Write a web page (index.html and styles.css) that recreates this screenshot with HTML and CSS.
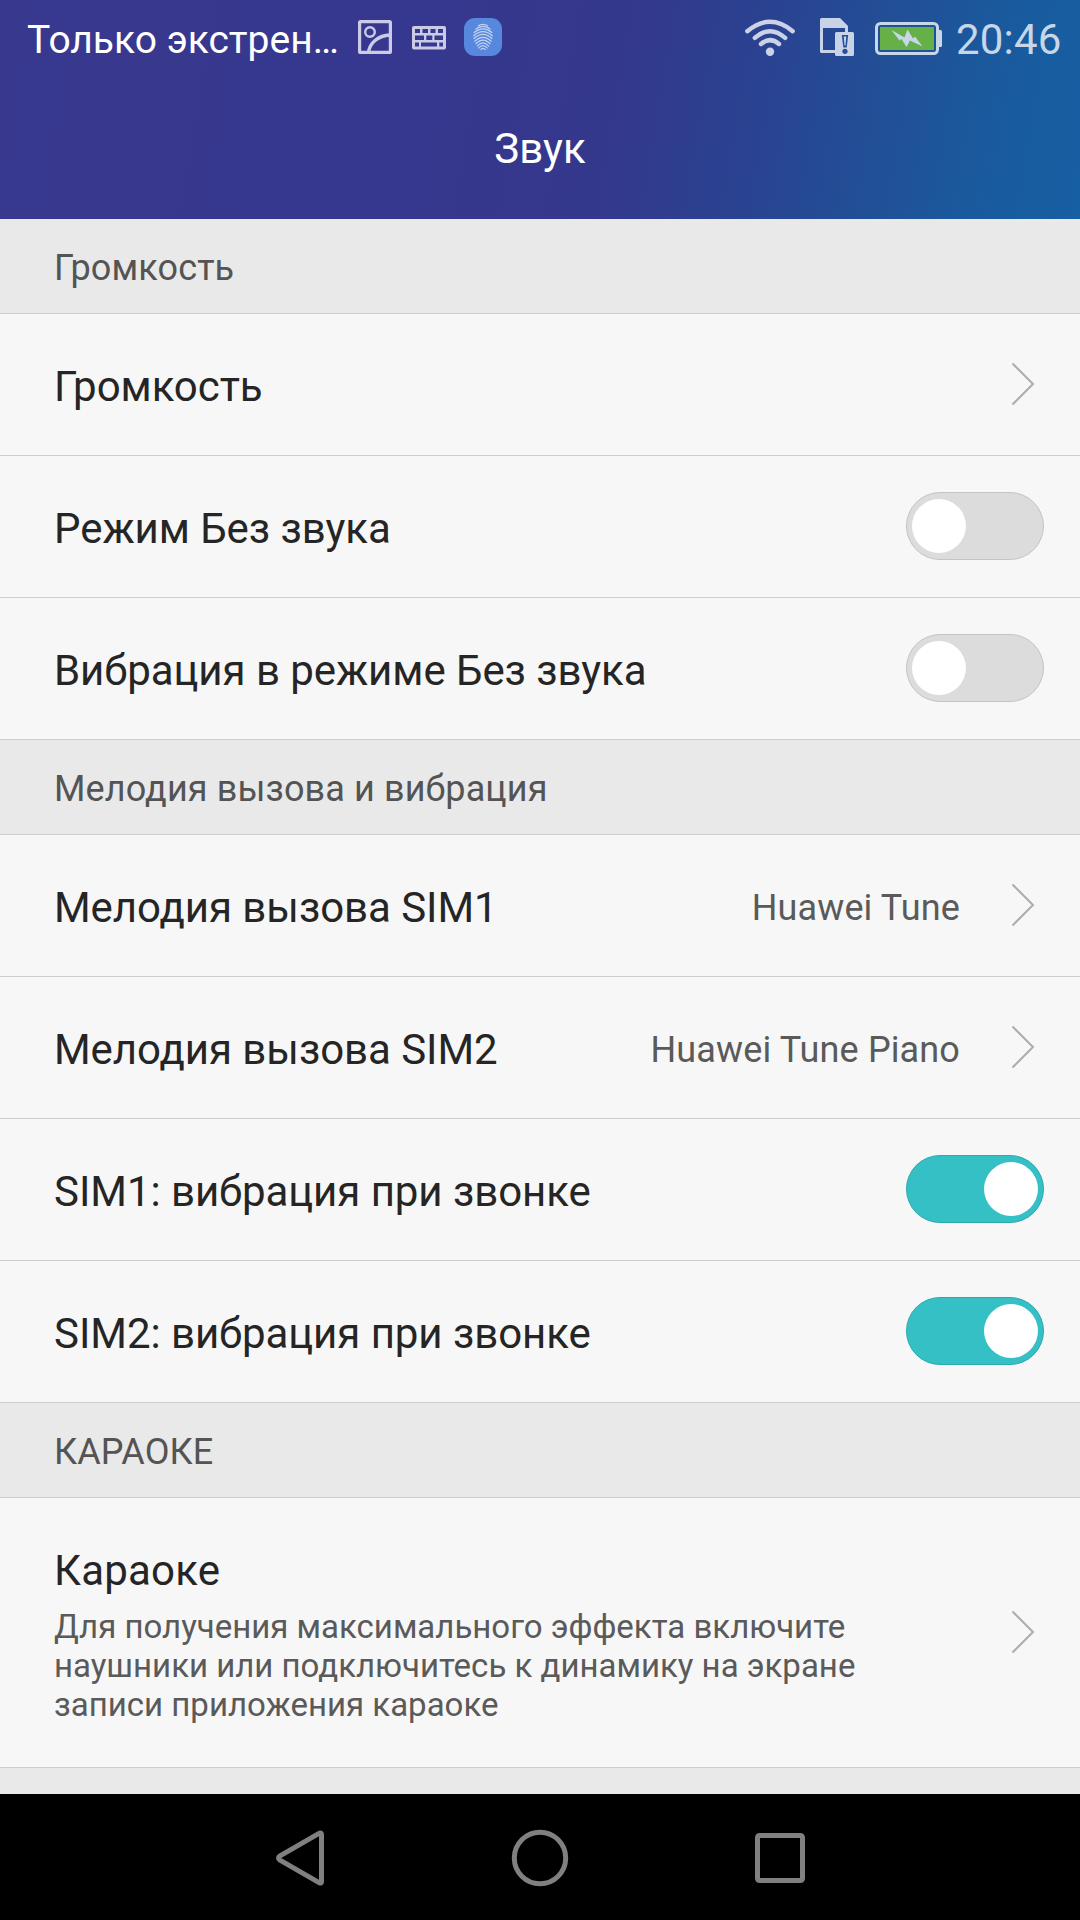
FILE: index.html
```html
<!DOCTYPE html>
<html lang="ru">
<head>
<meta charset="utf-8">
<title>Звук</title>
<link rel="stylesheet" href="styles.css">
</head>
<body>
<div class="screen">
  <header class="header">
    <div class="status">
      <span class="carrier">Только экстрен…</span>
      <svg class="icon-picture" width="34" height="34" viewBox="0 0 34 34" fill="none" stroke="#cbcbe5">
        <rect x="1.6" y="1.6" width="30.8" height="30.8" rx="1" stroke-width="3.2"/>
        <circle cx="12" cy="12" r="4.8" stroke-width="2.4"/>
        <path d="M10.500 32C12 23 20 15.500 32 15" stroke-width="3.400"/>
      </svg>
      <svg class="icon-keyboard" width="34" height="24" viewBox="0 0 34 24">
        <rect width="34" height="23.500" rx="2" fill="#cbcbe5"/>
        <path fill="#363990" d="M3 3h5v4h-5zM10.500 3h5.500v4h-5.500zM18.500 3h5v4h-5zM26 3h5v4h-5zM3 9.500h9v4.500h-9zM14.300 9.500h6v4.500h-6zM22.500 9.500h8.500v4.500h-8.500zM3 16.500h4v4h-4zM9 16.500h16v4h-16zM27.300 16.500h3.700v4h-3.700z"/>
      </svg>
      <svg class="icon-finger" width="38" height="38" viewBox="0 0 38 38" fill="none" stroke="#c6d4f1" stroke-width="1.200">
        <rect width="38" height="38" rx="11" fill="#5788dd" stroke="none"/>
        <path d="M14 8Q19 4.800 24 8M11.500 11.200Q19 5.500 26.500 11.200M9.800 14.800Q19 6.800 28.200 14.800M9.300 18Q19 9.200 28.700 18M9.700 20.800Q19 12 28.300 20.800M10.500 23.500Q19 15 27.500 23.500M11.700 26Q19 18.200 26.300 26M13 28.300Q19 21.500 25 28.300M14.500 30.300Q19 25 23.500 30.300M16.500 32Q19 28.800 21.500 32"/>
      </svg>
      <span class="spacer"></span>
      <svg class="icon-wifi" width="50" height="38" viewBox="0 0 50 38" fill="none" stroke="#cbd2e8" stroke-width="4.400" stroke-linecap="round">
        <path d="M2.300 13.200Q25-5.600 47.700 13.200M9.800 19.900Q25 6.500 40.200 19.900M16 26Q25 18.300 34 26"/>
        <circle cx="25" cy="33.800" r="4.200" fill="#cbd2e8" stroke="none"/>
      </svg>
      <svg class="icon-sim" width="34" height="38" viewBox="0 0 34 38">
        <path fill="#c8d3e8" fill-rule="evenodd" d="M1.500 0H20L28 8V14H32.500Q34 14 34 15.500V36.500Q34 38 32.500 38H16.500Q15 38 15 36.500V35H1.500Q0 35 0 33.500V1.500Q0 0 1.500 0ZM3 10V32H15V15.500Q15 14 16.500 14H25V10Z"/>
        <path fill="#24509a" d="M21.800 17h6.400l-1.500 12.500h-3.400z"/>
        <path fill="#c8d3e8" d="M23.800 18.500h2.400l-.7 9h-1z"/>
        <circle cx="25" cy="33.300" r="2.600" fill="#24509a"/>
      </svg>
      <svg class="icon-battery" width="67" height="33" viewBox="0 0 67 33">
        <rect x="1.500" y="1.500" width="61" height="30" rx="4" fill="none" stroke="#c7d6e8" stroke-width="3"/>
        <path d="M64 8h1.500q1.500 0 1.500 1.500v14q0 1.500-1.500 1.500H64z" fill="#c7d6e8"/>
        <rect x="5" y="5" width="54" height="23" fill="#66b147"/>
        <path fill="#c7d6e8" d="M16.500 8L29.500 15.500L32.500 7.500L38 16.500L40 14.500L47.500 24.500L35 18.500L31.500 25L26.500 17L24.500 18.500Z"/>
      </svg>
      <span class="time">20:46</span>
    </div>
    <h1 class="title">Звук</h1>
  </header>

  <main class="list">
    <h2 class="section">Громкость</h2>
    <div class="row">
      <span class="label">Громкость</span>
      <svg class="chevron" width="24" height="44" viewBox="0 0 24 44"><path d="M1.500 1.500L22 22L1.500 42.500"/></svg>
    </div>
    <div class="row">
      <span class="label">Режим Без звука</span>
      <span class="switch"><span class="knob"></span></span>
    </div>
    <div class="row">
      <span class="label">Вибрация в режиме Без звука</span>
      <span class="switch"><span class="knob"></span></span>
    </div>
    <h2 class="section">Мелодия вызова и вибрация</h2>
    <div class="row">
      <span class="label">Мелодия вызова SIM1</span>
      <span class="value">Huawei Tune</span>
      <svg class="chevron" width="24" height="44" viewBox="0 0 24 44"><path d="M1.500 1.500L22 22L1.500 42.500"/></svg>
    </div>
    <div class="row">
      <span class="label">Мелодия вызова SIM2</span>
      <span class="value">Huawei Tune Piano</span>
      <svg class="chevron" width="24" height="44" viewBox="0 0 24 44"><path d="M1.500 1.500L22 22L1.500 42.500"/></svg>
    </div>
    <div class="row">
      <span class="label">SIM1: вибрация при звонке</span>
      <span class="switch on"><span class="knob"></span></span>
    </div>
    <div class="row">
      <span class="label">SIM2: вибрация при звонке</span>
      <span class="switch on"><span class="knob"></span></span>
    </div>
    <h2 class="section">КАРАОКЕ</h2>
    <div class="row tall">
      <div class="texts">
        <span class="label">Караоке</span>
        <p class="summary">Для получения максимального эффекта включите<br>наушники или подключитесь к динамику на экране<br>записи приложения караоке</p>
      </div>
      <svg class="chevron" width="24" height="44" viewBox="0 0 24 44"><path d="M1.500 1.500L22 22L1.500 42.500"/></svg>
    </div>
  </main>

  <nav class="navbar">
    <svg width="60" height="60" viewBox="0 0 60 60"><path d="M10 27.800Q7 30 10 32.200L49.500 54.800Q51.500 55.500 51.500 53.500V6.500Q51.500 4.500 49.500 5.200Z"/></svg>
    <svg width="60" height="60" viewBox="0 0 60 60"><circle cx="30" cy="30" r="25.700"/></svg>
    <svg width="60" height="60" viewBox="0 0 60 60"><rect x="7.500" y="7.500" width="45" height="45" rx="2"/></svg>
  </nav>
</div>
</body>
</html>
```
FILE: styles.css
```css
* {
  box-sizing: border-box;
}

body {
  margin: 0;
  font-family: Roboto, "Noto Sans", sans-serif;
}

.screen {
  display: flex;
  flex-direction: column;
  width: 1080px;
  height: 1920px;
  overflow: hidden;
  background: #e9e9e9;
}

svg {
  display: block;
  flex: none;
}

.header {
  flex: none;
  height: 219px;
  color: #fff;
  background: linear-gradient(100deg, #38388f 0%, #36378e 40%, #34388c 56%, #2a4291 69%, #215097 81%, #185c9f 93%, #165fa2 100%);
}

.status {
  display: flex;
  align-items: flex-start;
  height: 75px;
  padding: 0 19px 0 27px;
}

.carrier {
  width: 331px;
  padding-top: 17px;
  font-size: 39px;
  line-height: 46px;
  white-space: nowrap;
}

.icon-picture {
  margin-top: 20px;
}

.icon-keyboard {
  margin: 26px 0 0 20px;
}

.icon-finger {
  margin: 18px 0 0 18px;
}

.spacer {
  flex: 1;
}

.icon-wifi {
  margin: 18px 25px 0 0;
}

.icon-sim {
  margin: 18px 21px 0 0;
}

.icon-battery {
  margin: 22px 14px 0 0;
}

.time {
  width: 105px;
  padding-top: 15px;
  font-size: 42px;
  line-height: 50px;
  letter-spacing: 0.2px;
  color: #c7d6e8;
}

.title {
  margin: 0;
  padding-top: 49px;
  font-size: 42px;
  font-weight: 400;
  line-height: 49px;
  text-align: center;
}

.list {
  flex: 1;
}

.section {
  height: 95px;
  margin: 0;
  padding: 28px 54px 0;
  border-bottom: 1px solid #cecece;
  font-size: 36px;
  font-weight: 400;
  line-height: 42px;
  letter-spacing: 0.12px;
  color: #545454;
}

.row {
  display: flex;
  align-items: center;
  height: 142px;
  padding: 0 36px 2px 54px;
  border-bottom: 1px solid #cecece;
  background: #f7f7f7;
}

.label {
  flex: 1;
  padding-top: 6px;
  font-size: 42px;
  line-height: 49px;
  letter-spacing: -0.05px;
  color: #252525;
}

.value {
  padding-top: 6px;
  margin-right: 51px;
  font-size: 36px;
  line-height: 42px;
  letter-spacing: 0.13px;
  color: #5a5a5a;
}

.chevron {
  margin-right: 9px;
  fill: none;
  stroke: #adadad;
  stroke-width: 2;
}

.switch {
  display: flex;
  align-items: center;
  width: 138px;
  height: 68px;
  padding: 0 5px;
  border: 1px solid #c4c4c4;
  border-radius: 34px;
  background: #dcdcdc;
}

.switch.on {
  justify-content: flex-end;
  border-color: #2aa9af;
  background: #35c0c6;
}

.knob {
  width: 54px;
  height: 54px;
  border-radius: 50%;
  background: #fff;
}

.row.tall {
  height: 270px;
}

.texts {
  flex: 1;
  display: flex;
  flex-direction: column;
  padding-top: 6px;
}

.texts .label {
  padding: 0;
  letter-spacing: 0.2px;
}

.summary {
  margin: 12px 0 0;
  font-size: 33px;
  line-height: 39px;
  color: #5a5a5a;
}

.navbar {
  display: flex;
  flex: none;
  justify-content: center;
  align-items: center;
  gap: 180px;
  height: 126px;
  padding-top: 2px;
  background: #000;
}

.navbar svg {
  fill: none;
  stroke: #808080;
  stroke-width: 5;
  stroke-linejoin: round;
}
```
